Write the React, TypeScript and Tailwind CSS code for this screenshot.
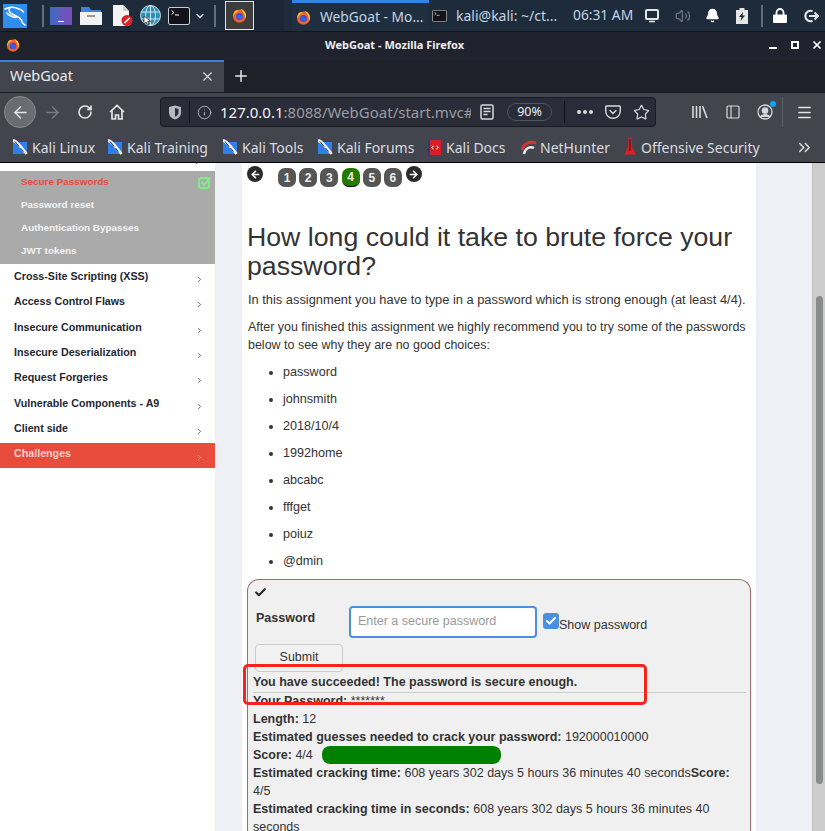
import {
  ArrowLeft,
  ArrowRight,
  Bell,
  Check,
  ChevronDown,
  ChevronRight,
  ChevronsRight,
  Info,
  Menu,
  PanelLeft,
  Plus,
  RotateCw,
  Star,
  Volume2,
  X,
} from 'lucide-react';

function FirefoxLogo({ size = 16 }: { size?: number }) {
  return (
    <svg width={size} height={size} viewBox="0 0 16 16" className="shrink-0">
      <circle cx="8" cy="8.6" r="7" fill="#f0622a" />
      <path d="M3 3.2C2 5 1 7 1.2 9 3 6 5 4 7.5 3.2 6 2 4 2.2 3 3.2Z" fill="#ffb31a" />
      <path d="M9 .8c3.6 1.2 6 4 6 7.6 0 1-.2 2-.6 3C14 7.500 12 4 9 .8Z" fill="#ffcb2e" />
      <circle cx="8" cy="9" r="3.7" fill="#5b3fd0" />
      <path d="M4.300 8.600C5 6.600 7 5.600 9.500 6 8 6.500 7 7 7 8c2 .4 4 0 4.700 1-.5 2-2 3.200-3.700 3.200" fill="#2a6be0" />
    </svg>
  );
}

function TerminalIcon({ w, h }: { w: number; h: number }) {
  return (
    <svg width={w} height={h} viewBox="0 0 22 18" className="shrink-0">
      <rect x=".5" y=".5" width="21" height="17" rx="1.500" fill="#111318" stroke="#c9ccd1" />
      <path d="M3.500 3.500 6 5.500 3.500 7.500" stroke="#fff" fill="none" />
      <path d="M7 8h4" stroke="#fff" />
    </svg>
  );
}

function KaliLogo() {
  return (
    <svg width="24" height="24" viewBox="0 0 24 24" className="shrink-0">
      <rect width="24" height="24" fill="#2f8df0" />
      <path
        d="M2 5c4-2 9-2.500 14 0M7 3.500C5 6 6 9 10 10.500c4 1.500 8 3 9 7 .4 1.600 1.500 3 3 3.500M4 9c2 3 6 4 9 4.500M16 5c2 .5 3.500 1.500 4.500 3"
        fill="none"
        stroke="#fff"
        strokeWidth="1.500"
        strokeLinecap="round"
      />
    </svg>
  );
}

function BookmarkIcon() {
  return (
    <svg width="16" height="16" viewBox="0 0 16 16" className="shrink-0">
      <path d="M1 3h14v12H1z" fill="#2f7fe8" />
      <path d="M1 1.500c3 .5 5 3 7.500 6 2 2.500 4 4.500 6 7.500" fill="none" stroke="#f4f4f4" strokeWidth="2.800" />
      <path d="M3 2.500 7 7.500M8.500 9l3 3.500" stroke="#333" strokeWidth="1" />
    </svg>
  );
}

function PocketIcon() {
  return (
    <svg width="16" height="16" viewBox="0 0 16 16" fill="none" stroke="#d8d9dd" strokeWidth="1.400">
      <path d="M1.500 2h13a.8.8 0 0 1 .8.8V7a7 7 0 0 1-14.600 0V2.800a.8.8 0 0 1 .8-.8Z" />
      <path d="m5 6.500 3 3 3-3" strokeLinecap="round" />
    </svg>
  );
}

function TopPanel() {
  return (
    <div className="flex h-[31px] items-center bg-[#1d2b3b] font-['Noto_Sans',sans-serif] text-[#c4d4e4]">
      <div className="ml-[3px]">
        <KaliLogo />
      </div>
      <div className="ml-[15px] h-[22px] w-[2px] bg-[#63707c]" />
      <div className="ml-[6px] flex h-[18px] w-[22px] items-end justify-center bg-gradient-to-r from-[#3d69c0] to-[#7a4bb8] pb-[3px]">
        <div className="h-[1px] w-[6px] bg-white" />
      </div>
      <svg width="22" height="20" viewBox="0 0 22 20" className="ml-[8px]">
        <path d="M1 1h8l2 3h10v4H1z" fill="#3c82d8" />
        <path d="M0 6h22v13H0z" fill="#f2f2f2" />
        <rect x="7" y="9" width="8" height="2" fill="#9a9a9a" />
      </svg>
      <svg width="21" height="21" viewBox="0 0 21 21" className="ml-[10px]">
        <path d="M1 0h10l6 6v15H1z" fill="#f3f3f3" />
        <path d="M11 0v6h6z" fill="#cfcfcf" />
        <circle cx="15" cy="15.500" r="5.500" fill="#d8232a" />
        <path d="m12.500 18 5-5" stroke="#fff" strokeWidth="1.600" />
      </svg>
      <svg width="21" height="21" viewBox="0 0 21 21" className="ml-[7px]" fill="none" stroke="#d9eef5" strokeWidth=".9">
        <circle cx="10.500" cy="10.500" r="10" fill="#2d8fb8" />
        <ellipse cx="10.500" cy="10.500" rx="5" ry="10" />
        <path d="M1 7h19M1 14h19M10.500 .5v20" />
        <path d="M4 11v8l2.200-2 1.400 3 1.400-.7-1.300-3h3z" fill="#fff" stroke="#222" strokeWidth=".7" />
      </svg>
      <div className="ml-[7px]">
        <TerminalIcon w={22} h={18} />
      </div>
      <ChevronDown size={12} strokeWidth={2.500} className="ml-[4px] text-[#d8dde2]" />
      <div className="ml-[8px] h-[22px] w-[2px] bg-[#63707c]" />
      <div className="ml-[9px] flex h-[29px] w-[29px] items-center justify-center border border-[#e2e2e2] bg-[#3c3c3c]">
        <FirefoxLogo size={15} />
      </div>
      <div className="h-full w-[30px] bg-[#1a2635]" />
      <div className="ml-[8px] flex h-full w-[137px] items-center border-t-[3px] border-[#3584e4] bg-[#1f2f40] pl-[4px]">
        <FirefoxLogo size={15} />
        <span className="ml-[9px] whitespace-nowrap text-[13.800px]">WebGoat - Mo...</span>
      </div>
      <div className="ml-[3px]">
        <TerminalIcon w={15} h={12} />
      </div>
      <span className="ml-[9px] w-[117px] whitespace-nowrap text-[14px]">kali@kali: ~/ct...</span>
      <span className="w-[79px] whitespace-nowrap text-[13.800px]">06:31 AM</span>
      <svg width="14" height="14" viewBox="0 0 14 14" fill="none" stroke="#e3e6e9" strokeWidth="2" className="-ml-[7px]">
        <rect x="1" y="1" width="12" height="9" rx="1" />
        <path d="M4 12.500h6" strokeWidth="1.600" />
      </svg>
      <Volume2 size={16} strokeWidth={2} className="ml-[16px] text-[#66717b]" />
      <Bell size={15} fill="#fff" className="ml-[14px] text-white" />
      <svg width="12" height="16" viewBox="0 0 12 16" className="ml-[16px]">
        <path d="M3.500 0h5v2H12v14H0V2h3.500z" fill="#e6e6e6" />
        <path d="M7 4 3 9h2.500L4.500 13 9 7.500H6.500z" fill="#1d2b3b" />
      </svg>
      <div className="ml-[13px] h-[22px] w-[2px] bg-[#63707c]" />
      <svg width="14" height="15" viewBox="0 0 14 15" className="ml-[10px]">
        <path d="M3.500 7V4.500a3.500 3.500 0 0 1 7 0V7" fill="none" stroke="#fff" strokeWidth="1.800" />
        <rect y="6.500" width="14" height="8.500" rx="1" fill="#fff" />
      </svg>
      <svg width="16" height="14" viewBox="0 0 16 14" fill="none" stroke="#e6e6e6" strokeWidth="2.200" className="ml-[16px]">
        <path d="M9.500 2.200A5.200 5.200 0 1 0 9.500 11.800" />
        <path d="M6 7h9M11.500 3.500 15 7l-3.500 3.500" strokeWidth="2" />
      </svg>
    </div>
  );
}

function TitleBar() {
  return (
    <div className="flex h-[29px] items-center border-t border-[#11151c] bg-[#20222e] pb-[2px] pl-[6px]">
      <FirefoxLogo size={14} />
      <span className="ml-[305px] w-[280px] whitespace-nowrap font-['Noto_Sans',sans-serif] text-[11px] font-bold text-[#eceef0]">
        WebGoat - Mozilla Firefox
      </span>
      <div className="ml-[164px] mt-[6px] h-[2px] w-[8px] bg-white" />
      <div className="ml-[14px] h-[8px] w-[8px] border-2 border-white" />
      <X size={12} strokeWidth={3.500} className="ml-[12px] text-white" />
    </div>
  );
}

function TabBar() {
  return (
    <div className="flex h-[32px] bg-[#1e202a]">
      <div className="flex w-[224px] items-center justify-between border-t-2 border-[#3584e4] bg-[#42444e] pb-[2px] pl-[10px] pr-[9px] font-['Noto_Sans',sans-serif] text-[14.500px] text-[#e9eaec]">
        WebGoat
        <X size={15} strokeWidth={1.800} className="text-[#d8d9dd]" />
      </div>
      <div className="flex items-center pl-[8px]">
        <Plus size={18} strokeWidth={2} className="text-[#e8e9ec]" />
      </div>
    </div>
  );
}

function NavBar() {
  return (
    <div className="flex h-[38px] items-center border-t border-[#191b22] bg-[#42444e] pl-[4px] pt-[1px] text-[#e4e5e8]">
      <div className="flex h-[32px] w-[32px] items-center justify-center rounded-full border border-[#8a8b92] bg-[#6b6c73]">
        <ArrowLeft size={19} strokeWidth={1.800} />
      </div>
      <ArrowRight size={19} strokeWidth={1.800} className="ml-[7px] text-[#797a82]" />
      <RotateCw size={16} strokeWidth={2.400} className="ml-[15px]" />
      <svg width="16" height="16" viewBox="0 0 16 16" className="ml-[16px]" fill="none" stroke="#e4e5e8" strokeWidth="1.700">
        <path d="M1 8 8 1.500 15 8M3 6.500V15h3.500v-4h3v4H13V6.500" />
      </svg>
      <div className="ml-[35px] flex h-[30px] w-[496px] items-center rounded-[4px] border border-[#191b22] bg-[#2a2c37]">
        <svg width="14" height="15" viewBox="0 0 14 15" className="ml-[7px] shrink-0">
          <path d="M7 .5 13 2v5.500c0 3.500-2.500 6-6 7-3.500-1-6-3.500-6-7V2z" fill="#b8b9be" />
          <path d="M7 3 10.500 4v3.500c0 2-1.400 3.500-3.500 4.300z" fill="#2a2c37" />
        </svg>
        <div className="ml-[7px] h-[22px] w-[1px] bg-[#111318]" />
        <Info size={15} strokeWidth={1.500} className="ml-[7px] text-[#b8b9be]" />
        <span className="ml-[8px] w-[251px] overflow-hidden whitespace-nowrap font-['Noto_Sans',sans-serif] text-[15px] text-[#f3f3f5]">
          127.0.0.1<span className="text-[#9b9ca3]">:8088/WebGoat/start.mvc#</span>
        </span>
        <svg width="14" height="16" viewBox="0 0 14 16" className="ml-[9px]" fill="none" stroke="#d8d9dd" strokeWidth="1.500">
          <rect x="1" y="1" width="12" height="14" rx="1.500" />
          <path d="M3.500 4.500h7M3.500 7.500h7M3.500 10.500h4" />
        </svg>
        <span className="ml-[13px] flex h-[18px] w-[45px] items-center justify-center rounded-full border border-[#50525c] font-['Noto_Sans',sans-serif] text-[12.500px] text-[#eceef0]">
          90%
        </span>
        <div className="ml-[12px] h-[22px] w-[1px] bg-[#111318]" />
        <div className="ml-[12px] flex gap-[2px]">
          <span className="h-[4px] w-[4px] rounded-full bg-[#d8d9dd]" />
          <span className="h-[4px] w-[4px] rounded-full bg-[#d8d9dd]" />
          <span className="h-[4px] w-[4px] rounded-full bg-[#d8d9dd]" />
        </div>
        <div className="ml-[12px]">
          <PocketIcon />
        </div>
        <Star size={17} strokeWidth={1.700} className="ml-[12px] text-[#d8d9dd]" />
      </div>
      <svg width="16" height="14" viewBox="0 0 16 14" className="ml-[36px]" stroke="#d8d9dd" strokeWidth="1.600" fill="none">
        <path d="M1 1v12M4.500 1v12M8 1v12M10.500 1l4.500 12" />
      </svg>
      <PanelLeft size={16} strokeWidth={1.800} className="ml-[17px] text-[#d8d9dd]" />
      <div className="relative ml-[16px]">
        <svg width="16" height="16" viewBox="0 0 16 16" fill="none" stroke="#d8d9dd" strokeWidth="1.300">
          <circle cx="8" cy="8" r="7" />
          <circle cx="8" cy="6.500" r="2.700" fill="#d8d9dd" />
          <path d="M3.500 13c1-3 8-3 9 0" fill="#d8d9dd" />
        </svg>
        <span className="absolute right-[-3px] top-[-3px] h-[6px] w-[6px] rounded-full bg-[#0ea5f0]" />
      </div>
      <div className="ml-[9px] h-[30px] w-[1px] bg-[#5b5d66]" />
      <Menu size={17} strokeWidth={2} className="ml-[13px] text-[#e4e5e8]" />
    </div>
  );
}

const bookmarks = [
  { label: 'Kali Linux', width: 95 },
  { label: 'Kali Training', width: 115 },
  { label: 'Kali Tools', width: 95 },
];

function BookmarksBar() {
  return (
    <div className="flex h-[33px] items-center border-b border-black bg-[#42444e] pl-[12px] pt-[2px] font-['Noto_Sans',sans-serif] text-[14px] text-[#dcdde0]">
      {bookmarks.map((b) => (
        <div key={b.label} className="flex items-center gap-[4px] whitespace-nowrap" style={{ width: b.width }}>
          <BookmarkIcon />
          {b.label}
        </div>
      ))}
      <div className="flex w-[111px] items-center gap-[4px] whitespace-nowrap">
        <BookmarkIcon />
        Kali Forums
      </div>
      <div className="flex w-[93px] items-center gap-[5px] whitespace-nowrap">
        <svg width="13" height="17" viewBox="0 0 13 17" className="shrink-0">
          <rect x="1" y="1" width="12" height="15" fill="#d81f26" />
          <rect y="1" width="2" height="16" fill="#2c3e6a" />
          <path d="m5.500 7-2 1.500 2 1.500M8.500 7l2 1.500-2 1.500" stroke="#fff" fill="none" />
        </svg>
        Kali Docs
      </div>
      <div className="flex w-[102px] items-center gap-[3px] whitespace-nowrap">
        <svg width="16" height="15" viewBox="0 0 16 15" className="shrink-0" fill="none">
          <path d="M1 10C2 4 8 1 15 3" stroke="#e03030" strokeWidth="3" />
          <path d="M3 14C4 8 9 6 13 8" stroke="#e8e8e8" strokeWidth="2.500" />
          <path d="M9 12l6 2" stroke="#444" strokeWidth="2" />
        </svg>
        NetHunter
      </div>
      <div className="flex w-[147px] items-center gap-[4px] whitespace-nowrap">
        <svg width="14" height="18" viewBox="0 0 14 18" className="shrink-0">
          <path d="M5.500 0h3l.5 9 4 7.500H1L5 9z" fill="#d81f26" />
          <path d="M6.500 1h1v12h-1z" fill="#3a0c0c" />
        </svg>
        Offensive Security
      </div>
      <ChevronsRight size={19} strokeWidth={2} className="ml-[25px] text-[#d8d9dd]" />
    </div>
  );
}

const subItems = ['Password reset', 'Authentication Bypasses', 'JWT tokens'];

const menuItems: { label: string; height: number }[] = [
  { label: 'Cross-Site Scripting (XSS)', height: 25 },
  { label: 'Access Control Flaws', height: 26 },
  { label: 'Insecure Communication', height: 25 },
  { label: 'Insecure Deserialization', height: 25 },
  { label: 'Request Forgeries', height: 26 },
  { label: 'Vulnerable Components - A9', height: 25 },
  { label: 'Client side', height: 27 },
];

function Sidebar() {
  return (
    <aside className="w-[215px] shrink-0 font-['Liberation_Sans',sans-serif] text-[10.700px] font-bold">
      <div className="flex h-[8px] justify-end overflow-hidden bg-white pr-[13px]">
        <ChevronRight size={9} strokeWidth={2} className="-mt-[6px] text-[#444]" />
      </div>
      <div className="bg-[#aaaaaa] pb-[1px] pl-[21px] text-[9.900px]">
        <div className="relative flex h-[23px] items-center text-[#e74c3c]">
          Secure Passwords
          <svg width="13" height="13" viewBox="0 0 13 13" fill="none" className="absolute left-[177px] top-[5px]">
            <rect x="1" y="2" width="10" height="10" rx="2" stroke="#7df07d" strokeWidth="1.800" />
            <path d="m3.500 6 2.500 3 6-7" stroke="#7df07d" strokeWidth="2" />
          </svg>
        </div>
        {subItems.map((s) => (
          <div key={s} className="flex h-[23px] items-center text-[#f4f4f4]">
            {s}
          </div>
        ))}
      </div>
      {menuItems.map((m) => (
        <div key={m.label} className="flex items-start justify-between pl-[14px] pr-[11px] pt-[1px] text-[#1f2733]" style={{ height: m.height }}>
          <span className="leading-[22px]">{m.label}</span>
          <ChevronRight size={9} strokeWidth={2} className="mt-[10px] text-[#444]" />
        </div>
      ))}
      <div className="flex h-[25px] items-start justify-between bg-[#e74c3c] pl-[14px] pr-[11px] text-[#f4d0cb]">
        <span className="leading-[21px]">Challenges</span>
        <ChevronRight size={9} strokeWidth={2} className="mt-[10px]" />
      </div>
    </aside>
  );
}

const passwords = ['password', 'johnsmith', '2018/10/4', '1992home', 'abcabc', 'fffget', 'poiuz', '@dmin'];

function Pager() {
  return (
    <div className="flex h-[24px] items-start">
      <div className="mt-[3px] flex h-[16px] w-[16px] items-center justify-center rounded-full bg-[#2b2b2b]">
        <ArrowLeft size={11} strokeWidth={3.500} className="text-white" />
      </div>
      <div className="ml-[15px] mt-[5px] flex gap-[3.200px]">
        {[1, 2, 3, 4, 5, 6].map((n) => (
          <div
            key={n}
            className={`flex h-[19px] w-[18px] items-center justify-center rounded-[7px] text-[12px] font-bold text-[#eee] ${n === 4 ? 'bg-[#257a00] border-b border-black' : 'bg-[#555555]'}`}
          >
            {n}
          </div>
        ))}
      </div>
      <div className="ml-[4px] mt-[3px] flex h-[16px] w-[16px] items-center justify-center rounded-full bg-[#2b2b2b]">
        <ArrowRight size={11} strokeWidth={3.500} className="text-white" />
      </div>
    </div>
  );
}

function AssignmentBox() {
  return (
    <div className="w-[504px] rounded-t-[12px] border border-b-0 border-[#a66a6a] bg-[#f0f0f0] px-[5px] text-[12.500px] leading-[18px]">
      <Check size={13} strokeWidth={4} className="ml-[1px] mt-[6px] text-[#2b2b2b]" />
      <div className="mt-[2px] flex h-[43px] items-start">
        <span className="ml-[3px] mt-[8px] w-[93px] font-bold">Password</span>
        <div className="mt-[5px] flex h-[32px] w-[188px] items-center rounded-[4px] border-2 border-[#4a90e2] bg-white pb-[2px] pl-[7px] text-[#9a9a9a]">
          Enter a secure password
        </div>
        <div className="ml-[6px] mt-[12px] flex h-[16px] w-[16px] items-center justify-center rounded-[3px] bg-[#4a90e2]">
          <Check size={12} strokeWidth={4} className="text-white" />
        </div>
        <span className="mt-[15px] whitespace-nowrap">Show password</span>
      </div>
      <div className="ml-[2px] flex h-[28px] w-[88px] items-center justify-center rounded-[4px] border border-[#cccccc] bg-[#f2f2f2] pb-[2px]">Submit</div>
      <div className="mt-[1px] font-bold">You have succeeded! The password is secure enough.</div>
      <div className="mr-[-1px] mt-[1px] h-[18px] border-t border-[#cccccc] leading-[16px]">
        <b>Your Password:</b> *******
      </div>
      <div>
        <div><b>Length:</b> 12</div>
        <div><b>Estimated guesses needed to crack your password:</b> 192000010000</div>
        <div className="flex h-[18px] items-center">
          <span><b>Score:</b> 4/4</span>
          <div className="ml-[9px] h-[18px] w-[179px] rounded-[8px] bg-[#008000]" />
        </div>
        <div><b>Estimated cracking time:</b> 608 years 302 days 5 hours 36 minutes 40 seconds<b>Score:</b> 4/5</div>
        <div><b>Estimated cracking time in seconds:</b> 608 years 302 days 5 hours 36 minutes 40 seconds</div>
      </div>
    </div>
  );
}

function MainContent() {
  return (
    <main className="w-[514px] shrink-0 overflow-hidden bg-white pl-[5px] pr-[5px] font-['Liberation_Sans',sans-serif] text-[12.600px] text-[#333333]">
      <Pager />
      <h1 className="mt-[36px] text-[26.700px] leading-[29px] text-[#333333]">How long could it take to brute force your password?</h1>
      <p className="ml-[1px] mt-[10px] text-[12.850px] leading-[18px]">In this assignment you have to type in a password which is strong enough (at least 4/4).</p>
      <p className="ml-[1px] mt-[9px] text-[12.470px] leading-[18px]">
        After you finished this assignment we highly recommend you to try some of the passwords below to see why they are no good choices:
      </p>
      <ul className="ml-[36px] mt-[9px] list-disc pl-0">
        {passwords.map((p) => (
          <li key={p} className="h-[27px] leading-[18px]">
            {p}
          </li>
        ))}
      </ul>
      <AssignmentBox />
    </main>
  );
}

export default function App() {
  return (
    <div className="relative flex h-[831px] w-[825px] flex-col overflow-hidden bg-white">
      <TopPanel />
      <TitleBar />
      <TabBar />
      <NavBar />
      <BookmarksBar />
      <div className="flex min-h-0 flex-1">
        <Sidebar />
        <div className="w-[27px] shrink-0 bg-[#eff0f6]" />
        <MainContent />
        <div className="w-[57px] shrink-0 border-r border-[#c4bfbc] bg-[#eff0f6]" />
        <div className="flex flex-1 justify-center bg-[#cccccc] pt-[133px]">
          <div className="h-[488px] w-[7px] rounded-full bg-[#8a8c8c]" />
        </div>
      </div>
      <div className="absolute left-[243px] top-[664px] h-[41px] w-[404px] rounded-[5px] border-[3px] border-[#f5231b]" />
    </div>
  );
}
